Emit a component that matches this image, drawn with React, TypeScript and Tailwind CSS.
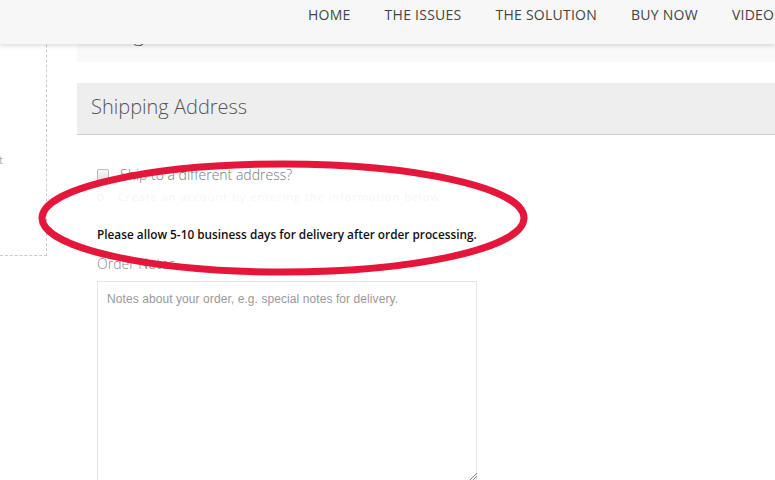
import React from "react";

export default function App() {
  const nav = ["HOME", "THE ISSUES", "THE SOLUTION", "BUY NOW", "VIDEOS"];
  return (
    <div className="relative w-[775px] h-[480px] overflow-hidden bg-white font-['Open_Sans',sans-serif]">
      {/* fixed header over content */}
      <header className="absolute top-0 left-0 right-0 z-10 h-[44px] bg-[#f7f7f7] shadow-[0_2px_4px_rgba(0,0,0,0.13)] flex gap-[34px] pl-[308px] pt-[5px] text-[14px] tracking-[0.25px] leading-5 text-[#444] whitespace-nowrap overflow-hidden">
        {nav.map((n) => (
          <span key={n}>{n}</span>
        ))}
      </header>

      <div className="flex">
        <aside className="w-[47px] h-[256px] shrink-0 border-r border-b border-dashed border-[#c9c9c9] overflow-hidden">
          <div className="mt-[152px] text-[11px] leading-4 text-[#aaa] -ml-[1px]">t</div>
        </aside>

        <main className="ml-[30px] flex-1 min-w-0">
          <div className="h-[62px] bg-[#f9f9f9] pl-[14px] pt-[20px] text-[20px] leading-7 font-light text-[#555]">
            Billing Details
          </div>

          <div className="mt-[21px] h-[52px] bg-[#eeeeee] border-b border-[#cfcfcf] pl-[14px] pt-[10px] text-[20px] leading-7 font-light text-[#555]">
            Shipping Address
          </div>

          <div className="pl-[20px]">
            <div className="mt-[30px] flex items-center h-5">
              <span className="w-[12px] h-[12px] rounded-[2px] border border-[#bbb] bg-gradient-to-b from-[#fafafa] to-[#e2e2e2]" />
              <span className="ml-[11px] text-[14px] leading-5 font-light text-[#777]">
                Ship to a different address?
              </span>
            </div>

            <div className="mt-[4px] flex items-center h-4 text-[11px] text-[#f6f6f6]">
              <span className="w-[7px] h-[7px] rounded-full border border-[#f2f2f2]" />
              <span className="ml-[14px] tracking-[1px]">
                Create an account by entering the information below
              </span>
            </div>

            <div className="mt-[21px] text-[11.8px] leading-4 font-semibold text-[#111] whitespace-nowrap">
              Please allow 5-10 business days for delivery after order processing.
            </div>

            <div className="mt-[12px] text-[14px] leading-5 font-light text-[#888]">
              Order Notes
            </div>

            <div className="mt-[7px] w-[380px] h-[210px] border border-[#e4e4e4] pl-[9px] pt-[9px] font-['Liberation_Sans',Arial,sans-serif] text-[12px] tracking-[0.08px] leading-4 text-[#999]">
              Notes about your order, e.g. special notes for delivery.
            </div>
          </div>
        </main>
      </div>

      {/* resize grip of textarea */}
      <svg className="absolute left-[469px] top-[472px]" width="8" height="8" viewBox="0 0 8 8">
        <path d="M1 8 L8 1 M4 8 L8 4" stroke="#888" strokeWidth="1" />
      </svg>

      {/* red hand-drawn ellipse annotation */}
      <svg className="absolute inset-0 pointer-events-none" width="775" height="480" viewBox="0 0 775 480">
        <ellipse cx="283" cy="218" rx="241" ry="54" fill="none" stroke="#e5163b" strokeWidth="7" />
      </svg>
    </div>
  );
}
